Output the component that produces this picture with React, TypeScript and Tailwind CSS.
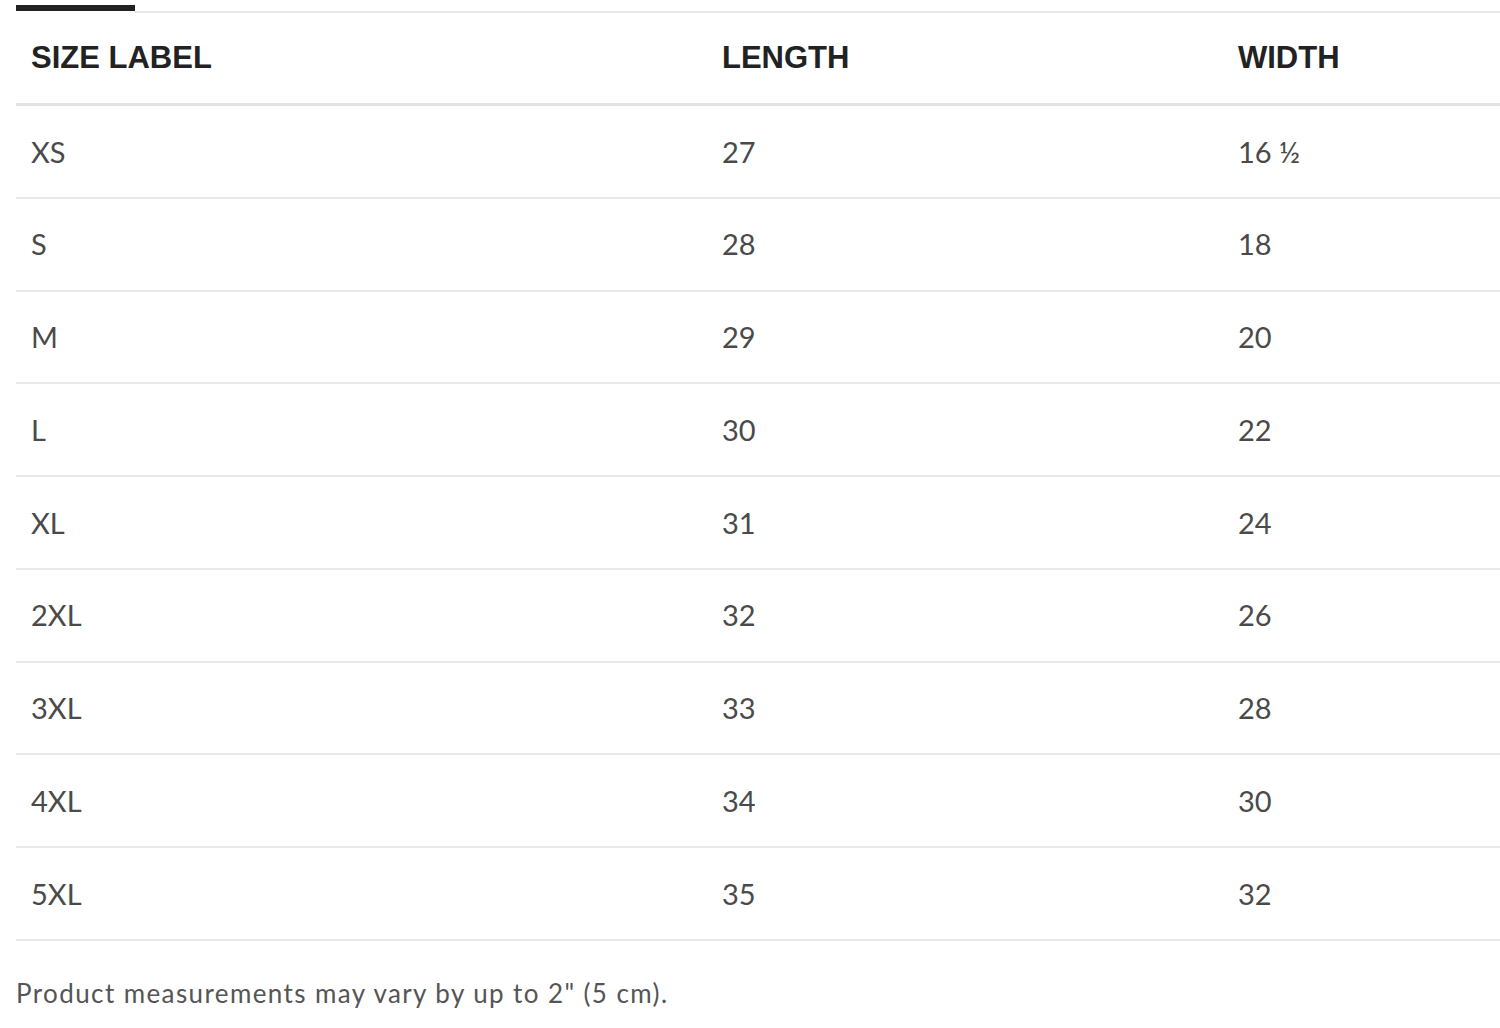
const rows: [string, string, string][] = [
  ['XS', '27', '16 ½'],
  ['S', '28', '18'],
  ['M', '29', '20'],
  ['L', '30', '22'],
  ['XL', '31', '24'],
  ['2XL', '32', '26'],
  ['3XL', '33', '28'],
  ['4XL', '34', '30'],
  ['5XL', '35', '32'],
];

export default function App() {
  return (
    <div className="min-h-screen bg-white pl-4 pt-[5px]">
      {/* tab indicator */}
      <div className="flex h-[8px] items-end">
        <div className="mb-[2px] h-[6px] w-[119px] bg-[#222]" />
        <div className="h-[2px] flex-1 bg-[#e8e8e8]" />
      </div>

      {/* header */}
      <div className="grid h-[93px] grid-cols-[691px_516px_1fr] items-center border-b-[3px] border-[#e3e3e3] font-['Liberation_Sans',Arial,sans-serif] text-[31px] font-bold text-[#222]">
        <div className="pl-[15px]">SIZE LABEL</div>
        <div className="pl-[15px]">LENGTH</div>
        <div className="pl-[15px]">WIDTH</div>
      </div>

      {/* body */}
      {rows.map(([size, length, width]) => (
        <div
          key={size}
          className="grid h-[92.75px] grid-cols-[691px_516px_1fr] items-center border-b-2 border-[#e8e8e8] font-['Lato',sans-serif] text-[29px] text-[#4a4a4a]"
        >
          <div className="pl-[15px]">{size}</div>
          <div className="pl-[15px]">{length}</div>
          <div className="pl-[15px]">{width}</div>
        </div>
      ))}

      <p className="mt-[33px] font-['Lato',sans-serif] text-[26px] tracking-[1.4px] text-[#555]">
        Product measurements may vary by up to 2" (5 cm).
      </p>
    </div>
  );
}
